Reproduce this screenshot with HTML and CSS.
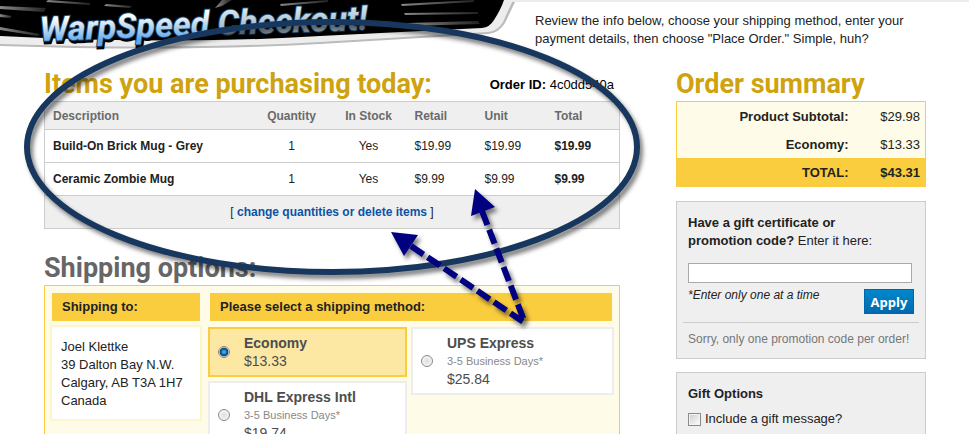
FILE: index.html
```
<!DOCTYPE html>
<html lang="en">
<head>
    <meta charset="UTF-8">
    <title>WarpSpeed Checkout!</title>
    <link rel="stylesheet" href="styles.css">
</head>
<body>

<header class="header">
    <h1 class="banner">
        <svg width="535" height="56" viewBox="0 0 535 56" role="img" aria-label="WarpSpeed Checkout!">
            <defs>
                <linearGradient id="warp" x1="0" y1="0" x2="0" y2="1">
                    <stop offset="0.25" stop-color="#ffffff"/>
                    <stop offset="0.5" stop-color="#c5dcee"/>
                    <stop offset="0.85" stop-color="#5fa8ee"/>
                </linearGradient>
                <linearGradient id="check" x1="0" y1="0" x2="0" y2="1">
                    <stop offset="0.2" stop-color="#d5e6f0"/>
                    <stop offset="0.6" stop-color="#a9bfcc"/>
                    <stop offset="0.8" stop-color="#8d9ba5"/>
                </linearGradient>
                <linearGradient id="streak" x1="0" y1="0" x2="1" y2="0">
                    <stop offset="0" stop-color="#888"/>
                    <stop offset="1" stop-color="#222"/>
                </linearGradient>
                <filter id="soft"><feGaussianBlur stdDeviation="0.7"/></filter>
            </defs>
            <path d="M0 46 Q180 52 320 44 L488 34 Q499 33 505 23 L516 0 H0Z" fill="#bbb" filter="url(#soft)"/>
            <path d="M0 44 Q180 50 320 42 L488 32 Q498 31 503 22 L513 0 H0Z" fill="#ededed"/>
            <path d="M0 36 Q180 45 320 36 L482 28 Q490 27 494 20 Q501 9 504 0 H0Z" fill="#000"/>
            <g fill="url(#streak)" filter="url(#soft)">
                <path d="M0 6 L46 8 L44 12 L0 9Z"/>
                <path d="M0 14 L12 16 L10 18 L0 17Z"/>
                <path d="M48 0 L90 3 L90 5 L46 2Z"/>
                <path d="M0 27 L40 34 L38 36 L0 30Z"/>
                <path d="M106 4 L132 6 L130 8 L104 6Z"/>
                <path d="M215 8 L222 0 L232 0 L222 6Z"/>
                <path d="M280 4 L328 0 L328 2 L281 6Z"/>
                <path d="M401 4 L474 0 L474 2 L402 6Z"/>
                <path d="M404 13 L478 12 L478 14 L405 15Z"/>
                <path d="M408 23 L478 21 L480 24 L408 26Z"/>
            </g>
            <g class="logo" transform="rotate(-2 40 40)">
                <text class="logo-shadow" x="41" y="43" aria-hidden="true">WarpSpeed Checkout!</text>
                <text class="logo-text" x="40" y="41"><tspan fill="url(#warp)">WarpSpeed</tspan> <tspan fill="url(#check)">Checkout!</tspan></text>
            </g>
        </svg>
    </h1>
    <div class="intro">
        <p>Review the info below, choose your shipping method, enter your payment details, then choose "Place Order." Simple, huh?</p>
    </div>
</header>

<div class="content">
    <main class="main">
        <div class="title-row">
            <h2>Items you are purchasing today:</h2>
            <p class="order-id"><b>Order ID:</b> 4c0dd540a</p>
        </div>
        <table class="items">
            <thead>
                <tr>
                    <th>Description</th>
                    <th class="quantity">Quantity</th>
                    <th class="stock">In Stock</th>
                    <th class="price">Retail</th>
                    <th class="price">Unit</th>
                    <th class="price">Total</th>
                </tr>
            </thead>
            <tbody>
                <tr>
                    <td><b>Build-On Brick Mug - Grey</b></td>
                    <td class="quantity">1</td>
                    <td class="stock">Yes</td>
                    <td>$19.99</td>
                    <td>$19.99</td>
                    <td><b>$19.99</b></td>
                </tr>
                <tr>
                    <td><b>Ceramic Zombie Mug</b></td>
                    <td class="quantity">1</td>
                    <td class="stock">Yes</td>
                    <td>$9.99</td>
                    <td>$9.99</td>
                    <td><b>$9.99</b></td>
                </tr>
            </tbody>
            <tfoot>
                <tr>
                    <td colspan="6">[ <a href="#">change quantities or delete items</a> ]</td>
                </tr>
            </tfoot>
        </table>

        <h2 class="shipping-title">Shipping options:</h2>
        <div class="shipping">
            <div class="ship-to">
                <h3>Shipping to:</h3>
                <address>
                    Joel Klettke<br>
                    39 Dalton Bay N.W.<br>
                    Calgary, AB T3A 1H7<br>
                    Canada
                </address>
            </div>
            <div class="ship-by">
                <h3>Please select a shipping method:</h3>
                <div class="methods">
                    <div class="method-col">
                        <label class="method selected">
                            <input type="radio" name="method" checked>
                            <span><b>Economy</b><span class="cost">$13.33</span></span>
                        </label>
                        <label class="method">
                            <input type="radio" name="method">
                            <span><b>DHL Express Intl</b><small>3-5 Business Days*</small><span class="cost">$19.74</span></span>
                        </label>
                    </div>
                    <div class="method-col">
                        <label class="method">
                            <input type="radio" name="method">
                            <span><b>UPS Express</b><small>3-5 Business Days*</small><span class="cost">$25.84</span></span>
                        </label>
                    </div>
                </div>
            </div>
        </div>
    </main>

    <aside class="sidebar">
        <h2>Order summary</h2>
        <table class="summary">
            <tr>
                <th>Product Subtotal:</th>
                <td>$29.98</td>
            </tr>
            <tr>
                <th>Economy:</th>
                <td>$13.33</td>
            </tr>
            <tr class="total">
                <th>TOTAL:</th>
                <td>$43.31</td>
            </tr>
        </table>

        <form class="panel">
            <label class="promo-label" for="promo"><b>Have a gift certificate or<br>promotion code?</b> Enter it here:</label>
            <input class="promo" id="promo" type="text">
            <div class="apply-row">
                <em>*Enter only one at a time</em>
                <button type="button">Apply</button>
            </div>
            <p class="sorry">Sorry, only one promotion code per order!</p>
        </form>

        <div class="panel gift">
            <h4>Gift Options</h4>
            <label><input type="checkbox">Include a gift message?</label>
        </div>
    </aside>
</div>

<!-- circle and arrows drawn over the page -->
<svg class="marks" width="660" height="340" viewBox="0 0 660 340" aria-hidden="true">
    <ellipse cx="332" cy="147" rx="305" ry="125" fill="none" stroke="#17375e" stroke-width="6"/>
    <g stroke="#000080" stroke-width="6" stroke-dasharray="15 5">
        <path d="M411 246 L525 323"/>
        <path d="M482 211 L525 323"/>
    </g>
    <g fill="#000080">
        <path d="M391 232 L418 235 L404 256Z"/>
        <path d="M475 189 L495 207 L471 216Z"/>
    </g>
</svg>

</body>
</html>
```
FILE: styles.css
```
* {
    box-sizing: border-box;
}

body {
    position: relative;
    margin: 0;
    background: #fff;
    color: #222;
    font: 13px/18px "Liberation Sans", Arial, sans-serif;
}

h1, h2, h3, h4, p {
    margin: 0;
}

h2 {
    padding-top: 2px;
    font: bold 27px/33px Roboto, sans-serif;
    color: #cfa20f;
}

a {
    color: #0b53a5;
    font-weight: bold;
    text-decoration: none;
}

/* header */
.header {
    display: flex;
    height: 66px;
}

.banner {
    flex: none;
    width: 512px;
}

.banner svg {
    display: block;
}

.logo {
    font: italic bold 34px Roboto, sans-serif;
}

.logo-shadow {
    fill: #000;
    stroke: #000;
    stroke-width: 3px;
}

.logo-text {
    stroke: #123f66;
    stroke-width: 2px;
    paint-order: stroke;
}

.intro {
    flex: 1;
    border-top: 2px solid #ececec;
    padding: 10px 43px 0 23px;
}

/* columns */
.content {
    display: flex;
    gap: 56px;
    padding: 0 43px 0 44px;
}

.main {
    flex: 1;
}

.sidebar {
    flex: none;
    width: 250px;
}

.title-row {
    display: flex;
    justify-content: space-between;
    align-items: center;
}

.order-id {
    padding: 2px 6px 0 0;
    color: #000;
}

/* items table */
.items {
    width: 100%;
    border: 1px solid #ccc;
    border-collapse: collapse;
    table-layout: fixed;
    font-size: 12px;
}

.items th,
.items td {
    height: 33px;
    padding: 0 0 0 8px;
    text-align: left;
    border-top: 1px solid #ccc;
}

.items th {
    height: 28px;
    background: #efefef;
    color: #6a6a6a;
}

.items .quantity {
    width: 78px;
    padding: 0;
    text-align: center;
}

.items .stock {
    width: 76px;
    padding: 0;
    text-align: center;
}

.items .price {
    width: 70px;
}

.items .price:last-child {
    width: 73px;
}

.items tfoot td {
    background: #efefef;
    padding: 0;
    text-align: center;
}

/* shipping */
.shipping-title {
    margin-top: 21px;
    color: #666;
}

.shipping {
    display: flex;
    gap: 6px;
    border: 1px solid #facd3f;
    background: #fefce8;
    padding: 7px 5px;
}

.ship-to {
    flex: none;
    width: 152px;
}

.ship-by {
    flex: 1;
}

.shipping h3 {
    margin: 0 2px;
    padding: 0 10px;
    background: #facd3f;
    font-size: 13px;
    line-height: 28px;
}

address {
    margin-top: 4px;
    border: 2px solid #fdf6c8;
    background: #fff;
    padding: 11px 9px 9px;
    font-style: normal;
}

.methods {
    display: grid;
    grid-template-columns: 199fr 203fr;
    align-items: start;
    gap: 4px;
    margin-top: 6px;
}

.method-col {
    display: grid;
    gap: 4px;
}

.method {
    display: flex;
    align-items: center;
    gap: 14px;
    border: 2px solid #ededed;
    background: #fff;
    padding: 5px 8px;
    color: #4d4d4d;
}

.method.selected {
    border-color: #facd3f;
    background: #fde8a3;
}

.method b,
.method small,
.method .cost {
    display: block;
}

.method b,
.method .cost {
    font-size: 14px;
}

.method small {
    font-size: 11px;
    color: #888;
}

.method input {
    appearance: none;
    flex: none;
    width: 12px;
    height: 12px;
    margin: 0;
    border: 1px solid #888;
    border-radius: 50%;
    background: radial-gradient(#ddd, #fff);
}

.method input:checked {
    background: radial-gradient(#39b4e6 0 1px, #15507f 3px 4px, #fff 5px);
}

/* sidebar */
.summary {
    width: 100%;
    border: 1px solid #facd3f;
    border-collapse: collapse;
    background: #fefce8;
}

.summary th,
.summary td {
    height: 28px;
    padding: 2px 5px 0 0;
    text-align: right;
}

.summary td {
    width: 72px;
}

.summary .total {
    background: #facd3f;
}

.summary .total th,
.summary .total td {
    height: 29px;
    font-weight: bold;
}

.panel {
    margin-top: 14px;
    border: 1px solid #ccc;
    background: #efefef;
    padding: 12px 6px 10px;
}

.promo-label {
    display: block;
    padding: 0 5px;
}

.promo {
    display: block;
    width: 224px;
    height: 20px;
    margin: 13px 5px 0;
    border: 1px solid #aaa;
    background: #fff;
}

.apply-row {
    display: flex;
    justify-content: space-between;
    align-items: flex-start;
    padding: 6px 5px 8px;
    border-bottom: 1px solid #ccc;
}

.apply-row em {
    font-size: 12px;
    line-height: 12px;
}

.apply-row button {
    width: 50px;
    height: 25px;
    border: 1px solid #0068a8;
    padding: 0;
    background: linear-gradient(#0088cc, #0069ae);
    color: #fff;
    font: bold 13px "Open Sans", sans-serif;
}

.sorry {
    padding: 7px 5px 0;
    font-size: 12px;
    color: #777;
    white-space: nowrap;
}

.gift {
    margin-top: 13px;
    padding: 12px 11px;
}

.gift h4 {
    font-size: 13px;
}

.gift label {
    display: flex;
    align-items: center;
    gap: 4px;
    margin-top: 7px;
}

.gift input {
    appearance: none;
    width: 13px;
    height: 13px;
    margin: 0;
    border: 1px solid #8a8a8a;
    background: linear-gradient(135deg, #ccc, #fff);
    box-shadow: inset 0 0 0 1px #f4f4f4;
}

.marks {
    position: absolute;
    top: 0;
    left: 0;
    pointer-events: none;
    filter: drop-shadow(3px 4px 2px rgba(0, 0, 0, 0.5));
}
```
